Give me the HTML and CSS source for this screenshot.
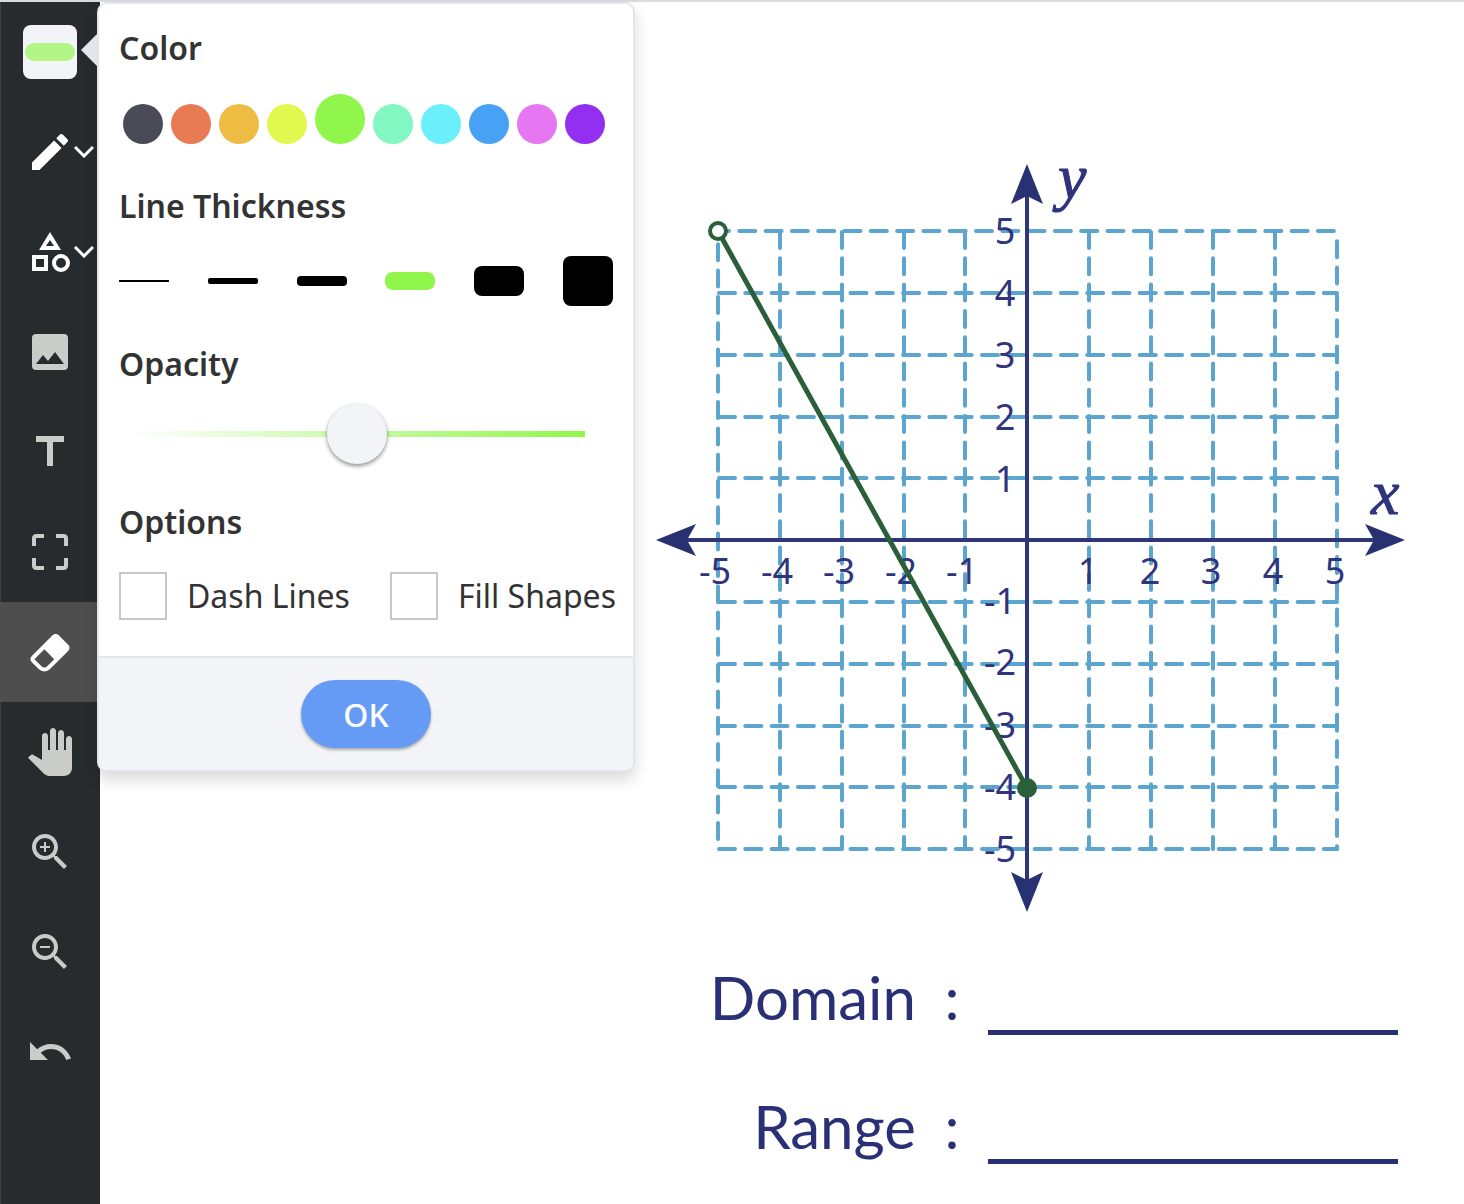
FILE: index.html
```html
<!DOCTYPE html>
<html lang="en">
<head>
    <meta charset="UTF-8">
    <meta name="viewport" content="width=device-width, initial-scale=1.0">
    <title>Domain and Range</title>
    <link rel="stylesheet" href="styles.css">
</head>
<body>
    <div class="app">
        <nav class="toolbar" aria-label="Drawing tools">
            <button class="tool" type="button" aria-label="Line style">
                <span class="style-preview"><span class="style-line"></span></span>
            </button>
            <button class="tool bright" type="button" aria-label="Pencil">
                <svg class="icon" viewBox="0 0 24 24"><path d="M3 17.25V21h3.75L17.81 9.94l-3.75-3.75L3 17.25zM20.71 7.04c.39-.39.39-1.02 0-1.41l-2.34-2.34c-.39-.39-1.02-.39-1.41 0l-1.83 1.83 3.75 3.75 1.83-1.83z"/></svg>
                <svg class="chevron" viewBox="0 0 20 12"><path d="M1 1l9 9 9-9"/></svg>
            </button>
            <button class="tool bright" type="button" aria-label="Shapes">
                <svg class="icon" viewBox="0 0 48 48"><path fill-rule="evenodd" d="M24 4l11 18H13zM24 12l-4 6h8zM6 27h16v16H6zM10 31v8h8v-8zM35 26a9 9 0 1 1 0 18a9 9 0 0 1 0-18zM35 30a5 5 0 1 0 0 10a5 5 0 0 0 0-10z"/></svg>
                <svg class="chevron" viewBox="0 0 20 12"><path d="M1 1l9 9 9-9"/></svg>
            </button>
            <button class="tool" type="button" aria-label="Image">
                <svg class="icon" viewBox="0 0 48 48"><path fill-rule="evenodd" d="M10 6h28a4 4 0 0 1 4 4v28a4 4 0 0 1-4 4H10a4 4 0 0 1-4-4V10a4 4 0 0 1 4-4zM10 36h28L29 24l-7 9-5-6z"/></svg>
            </button>
            <button class="tool" type="button" aria-label="Text">
                <svg class="icon" viewBox="0 0 24 24"><path d="M5 4v3h5.5v12h3V7H19V4z"/></svg>
            </button>
            <button class="tool" type="button" aria-label="Select">
                <svg class="icon" viewBox="0 0 24 24"><path d="M3 5v4h2V5h4V3H5c-1.1 0-2 .9-2 2zm2 10H3v4c0 1.1.9 2 2 2h4v-2H5v-4zm14 4h-4v2h4c1.1 0 2-.9 2-2v-4h-2v4zm0-16h-4v2h4v4h2V5c0-1.1-.9-2-2-2z"/></svg>
            </button>
            <button class="tool bright active" type="button" aria-label="Eraser">
                <svg class="icon" viewBox="0 0 24 24"><path d="M16.24 3.56l4.95 4.94c.78.79.78 2.05 0 2.84L12 20.53a4.01 4.01 0 0 1-5.66 0L2.81 17c-.78-.79-.78-2.05 0-2.84l10.6-10.6c.79-.78 2.05-.78 2.83 0M4.22 15.58l3.54 3.53c.78.79 2.04.79 2.83 0l3.53-3.53-4.95-4.95-4.95 4.95z"/></svg>
            </button>
            <button class="tool" type="button" aria-label="Pan">
                <svg class="icon" viewBox="0 0 24 24"><path d="M23 5.5V20c0 2.2-1.8 4-4 4h-7.3c-1.08 0-2.1-.43-2.85-1.19L1 14.83s1.26-1.23 1.3-1.25c.22-.19.49-.29.79-.29.22 0 .42.06.6.16.04.01 4.31 2.46 4.31 2.46V4c0-.83.67-1.5 1.5-1.5S11 3.17 11 4v7h1V1.5c0-.83.67-1.5 1.5-1.5S15 .67 15 1.5V11h1V2.5c0-.83.67-1.5 1.5-1.5s1.5.67 1.5 1.5V11h1V5.5c0-.83.67-1.5 1.5-1.5s1.5.67 1.5 1.5z"/></svg>
            </button>
            <button class="tool" type="button" aria-label="Zoom in">
                <svg class="icon" viewBox="0 0 24 24"><path d="M15.5 14h-.79l-.28-.27C15.41 12.59 16 11.11 16 9.5 16 5.91 13.09 3 9.5 3S3 5.91 3 9.5 5.91 16 9.5 16c1.61 0 3.09-.59 4.23-1.57l.27.28v.79l5 4.99L20.49 19l-4.99-5zm-6 0C7.01 14 5 11.99 5 9.5S7.01 5 9.5 5 14 7.01 14 9.5 11.99 14 9.5 14z"/><path d="M12 10h-2v2H9v-2H7V9h2V7h1v2h2v1z"/></svg>
            </button>
            <button class="tool" type="button" aria-label="Zoom out">
                <svg class="icon" viewBox="0 0 24 24"><path d="M15.5 14h-.79l-.28-.27C15.41 12.59 16 11.11 16 9.5 16 5.91 13.09 3 9.5 3S3 5.91 3 9.5 5.91 16 9.5 16c1.61 0 3.09-.59 4.23-1.57l.27.28v.79l5 4.99L20.49 19l-4.99-5zm-6 0C7.01 14 5 11.99 5 9.5S7.01 5 9.5 5 14 7.01 14 9.5 11.99 14 9.5 14zM7 9h5v1H7z"/></svg>
            </button>
            <button class="tool" type="button" aria-label="Undo">
                <svg class="icon" viewBox="0 0 24 24"><path d="M12.5 8c-2.65 0-5.05.99-6.9 2.6L2 7v9h9l-3.62-3.62c1.39-1.16 3.16-1.88 5.12-1.88 3.54 0 6.55 2.31 7.6 5.5l2.37-.78C21.08 11.03 17.15 8 12.5 8z"/></svg>
            </button>
        </nav>

        <main class="canvas">
            <div class="worksheet">
                <svg class="graph" viewBox="0 -30 760 790" role="img" aria-label="Graph of a line segment from (-5, 5) to (0, -4)">
                    <!-- grid -->
                    <g class="grid">
                        <path d="M69 133H687M69 195H687M69 257H687M69 318H687M69 442H687M69 504H687M69 566H687M69 627H687M69 689H687"/>
                        <path d="M130 72V689M192 72V689M254 72V689M315 72V689M439 72V689M501 72V689M563 72V689M625 72V689"/>
                        <path d="M68 71H687" stroke-dashoffset="5"/>
                        <path d="M68 72V689" stroke-dashoffset="14"/>
                        <path d="M687 72V689" stroke-dashoffset="17"/>
                    </g>

                    <!-- numbers -->
                    <g class="numbers">
                        <text x="65" y="424">-5</text>
                        <text x="127" y="424">-4</text>
                        <text x="189" y="424">-3</text>
                        <text x="251" y="424">-2</text>
                        <text x="312" y="424">-1</text>
                        <text x="438" y="424">1</text>
                        <text x="500" y="424">2</text>
                        <text x="561" y="424">3</text>
                        <text x="623" y="424">4</text>
                        <text x="685" y="424">5</text>
                        <text x="355" y="84">5</text>
                        <text x="355" y="146">4</text>
                        <text x="355" y="208">3</text>
                        <text x="355" y="270">2</text>
                        <text x="355" y="332">1</text>
                        <text x="350" y="454">-1</text>
                        <text x="350" y="515">-2</text>
                        <text x="350" y="578">-3</text>
                        <text x="350" y="640">-4</text>
                        <text x="350" y="702">-5</text>
                    </g>

                    <!-- axes -->
                    <path class="axis" d="M36 380H724M377 36V724"/>
                    <path class="arrow" d="M6 380l40-16-9 16 9 16zM755 380l-40-16 9 16-9 16zM377 4l-16 40 16-8 16 8zM377 752l-16-40 16 8 16-8z"/>
                    <text class="axis-name" x="408" y="38">y</text>
                    <text class="axis-name" x="721" y="354">x</text>

                    <!-- segment -->
                    <path class="segment" d="M68 71L377 628"/>
                    <circle class="open-point" cx="68" cy="71" r="8"/>
                    <circle class="closed-point" cx="377" cy="628" r="10"/>
                </svg>

                <form class="answers">
                    <label for="domain">Domain</label>
                    <span>:</span>
                    <input id="domain" type="text">
                    <label for="range">Range</label>
                    <span>:</span>
                    <input id="range" type="text">
                </form>
            </div>
        </main>

        <form class="popover">
            <div class="popover-body">
                <section class="group">
                    <h2>Color</h2>
                    <div class="swatches">
                        <input type="radio" name="color" class="swatch black" aria-label="Black">
                        <input type="radio" name="color" class="swatch red" aria-label="Red">
                        <input type="radio" name="color" class="swatch orange" aria-label="Orange">
                        <input type="radio" name="color" class="swatch yellow" aria-label="Yellow">
                        <input type="radio" name="color" class="swatch green" aria-label="Green" checked>
                        <input type="radio" name="color" class="swatch mint" aria-label="Mint">
                        <input type="radio" name="color" class="swatch cyan" aria-label="Cyan">
                        <input type="radio" name="color" class="swatch blue" aria-label="Blue">
                        <input type="radio" name="color" class="swatch pink" aria-label="Pink">
                        <input type="radio" name="color" class="swatch purple" aria-label="Purple">
                    </div>
                </section>
                <section class="group">
                    <h2>Line Thickness</h2>
                    <div class="thicknesses">
                        <input type="radio" name="thickness" class="thickness t1" aria-label="Thinnest">
                        <input type="radio" name="thickness" class="thickness t2" aria-label="Thin">
                        <input type="radio" name="thickness" class="thickness t3" aria-label="Medium">
                        <input type="radio" name="thickness" class="thickness t4" aria-label="Thick" checked>
                        <input type="radio" name="thickness" class="thickness t5" aria-label="Thicker">
                        <input type="radio" name="thickness" class="thickness t6" aria-label="Thickest">
                    </div>
                </section>
                <section class="group">
                    <h2><label for="opacity">Opacity</label></h2>
                    <div class="slider">
                        <input type="range" id="opacity" min="0" max="100" value="50">
                    </div>
                </section>
                <section class="group">
                    <h2>Options</h2>
                    <div class="options">
                        <label><input type="checkbox" name="dash">Dash Lines</label>
                        <label><input type="checkbox" name="fill">Fill Shapes</label>
                    </div>
                </section>
            </div>
            <div class="popover-footer">
                <button class="ok" type="button">OK</button>
            </div>
        </form>
    </div>
</body>
</html>
```
FILE: styles.css
```css
* {
    box-sizing: border-box;
}
body {
    margin: 0;
    font-family: "Noto Sans", sans-serif;
    background-color: #fff;
    color: #333;
}
.app {
    position: relative;
    display: flex;
    min-height: 100vh;
    border-top: 2px solid #dadbdf;
}

/* Toolbar */
.toolbar {
    display: flex;
    flex-direction: column;
    flex-shrink: 0;
    width: 100px;
    background-color: #282b2e;
    box-shadow: inset 1px 0 #3c4043;
}
.tool {
    position: relative;
    display: flex;
    align-items: center;
    justify-content: center;
    height: 100px;
    padding: 0;
    border: none;
    background: none;
    color: #c9ccc8;
    cursor: pointer;
}
.tool.bright {
    color: #fff;
}
.tool.active {
    background-color: #4e4e4e;
}
.icon {
    width: 48px;
    height: 48px;
    fill: currentColor;
}
.chevron {
    position: absolute;
    right: 6px;
    top: 44px;
    width: 20px;
    height: 12px;
    fill: none;
    stroke: currentColor;
    stroke-width: 3;
}
.style-preview {
    display: flex;
    align-items: center;
    justify-content: center;
    width: 54px;
    height: 54px;
    border-radius: 8px;
    background-color: #f3f4f7;
}
.style-line {
    width: 50px;
    height: 18px;
    border-radius: 9px;
    background-color: #b2f686;
}

/* Worksheet */
.canvas {
    flex: 1;
    display: flex;
    justify-content: flex-end;
    padding: 128px 54px 40px;
}
.worksheet {
    width: 760px;
    color: #2a3075;
}
.graph {
    display: block;
    width: 100%;
}
.grid path {
    fill: none;
    stroke: #5ba5cf;
    stroke-width: 4;
    stroke-linecap: round;
    stroke-dasharray: 16 10.3;
}
.numbers {
    font-size: 36px;
    fill: #2f347c;
    text-anchor: middle;
}
.axis {
    stroke: #2f3678;
    stroke-width: 4;
}
.arrow {
    fill: #283272;
}
.axis-name {
    font-family: "Liberation Serif", serif;
    font-size: 64px;
    font-style: italic;
    fill: #2f347c;
    stroke: #2f347c;
}
.segment {
    stroke: #2a5f3a;
    stroke-width: 5;
}
.open-point {
    fill: #fff;
    stroke: #2a5f3a;
    stroke-width: 4;
}
.closed-point {
    fill: #2a5f3a;
}
.answers {
    display: grid;
    grid-template-columns: 266px 72px 1fr;
    row-gap: 49px;
    padding: 37px 12px 0 0;
    font-family: Lato, sans-serif;
    font-size: 60px;
    line-height: 80px;
}
.answers label {
    text-align: right;
}
.answers span {
    text-align: center;
}
.answers input {
    min-width: 0;
    height: 78px;
    padding: 0;
    border: none;
    border-bottom: 5px solid #283075;
    background: none;
    color: inherit;
    font: inherit;
}

/* Popover */
.popover {
    position: absolute;
    left: 97px;
    top: 0;
    width: 538px;
    border: 2px solid #e4e5ec;
    border-radius: 10px;
    background-color: #fff;
    box-shadow: 0 8px 16px rgba(0, 0, 0, 0.15);
    font-size: 32px;
    line-height: 44px;
}
.popover::before {
    content: "";
    position: absolute;
    left: -18px;
    top: 30px;
    border: 16px solid transparent;
    border-left-width: 0;
    border-right-color: #e4e5ec;
}
.popover-body {
    padding: 22px 20px 36px;
}
.group {
    height: 158px;
}
.group:last-child {
    height: auto;
}
.group h2 {
    margin: 0;
    font-size: 32px;
    font-weight: 600;
}
.popover input {
    appearance: none;
    flex-shrink: 0;
    margin: 0;
}
.swatches {
    display: flex;
    align-items: flex-end;
    gap: 8px;
    padding: 24px 4px 0;
}
.swatch {
    width: 40px;
    height: 40px;
    border-radius: 50%;
}
.swatch:checked {
    width: 50px;
    height: 50px;
}
.black { background-color: #4b4b57; }
.red { background-color: #e87a54; }
.orange { background-color: #efbc43; }
.yellow { background-color: #e1f84f; }
.green { background-color: #90f64b; }
.mint { background-color: #82f7c2; }
.cyan { background-color: #6beffa; }
.blue { background-color: #47a1f5; }
.pink { background-color: #e776f3; }
.purple { background-color: #932ff1; }
.thicknesses {
    display: flex;
    align-items: center;
    justify-content: space-between;
    padding-top: 28px;
}
.thickness {
    width: 50px;
    border-radius: 8px;
    background-color: #000;
}
.thickness:checked {
    background-color: #90f64b;
}
.t1 { height: 2px; border-radius: 0; }
.t2 { height: 6px; border-radius: 2px; }
.t3 { height: 10px; border-radius: 4px; }
.t4 { height: 18px; }
.t5 { height: 30px; }
.t6 { height: 50px; }
.slider {
    display: flex;
    padding: 18px 28px 0 10px;
}
.slider input {
    width: 100%;
    height: 60px;
    background: linear-gradient(to right, #fff, #90f64b) center / 100% 6px no-repeat;
}
.slider input::-webkit-slider-thumb {
    appearance: none;
    width: 60px;
    height: 60px;
    border-radius: 50%;
    background-color: #f3f4f7;
    box-shadow: 0 2px 4px rgba(0, 0, 0, 0.45);
}
.options {
    display: flex;
    gap: 40px;
    padding-top: 28px;
}
.options label {
    display: flex;
    align-items: center;
    gap: 20px;
    white-space: nowrap;
}
.options input {
    width: 48px;
    height: 48px;
    border: 2px solid #c8c8c8;
    background-color: #fff;
}
.popover-footer {
    display: flex;
    justify-content: center;
    padding: 22px;
    border-top: 2px solid #e4e5ec;
    border-radius: 0 0 8px 8px;
    background-color: #f3f4f7;
}
.ok {
    width: 130px;
    height: 68px;
    border: none;
    border-radius: 34px;
    background-color: #659bf4;
    box-shadow: 0 2px 3px rgba(0, 0, 0, 0.3);
    color: #fff;
    font-family: inherit;
    font-size: 32px;
    font-weight: 500;
}
```
